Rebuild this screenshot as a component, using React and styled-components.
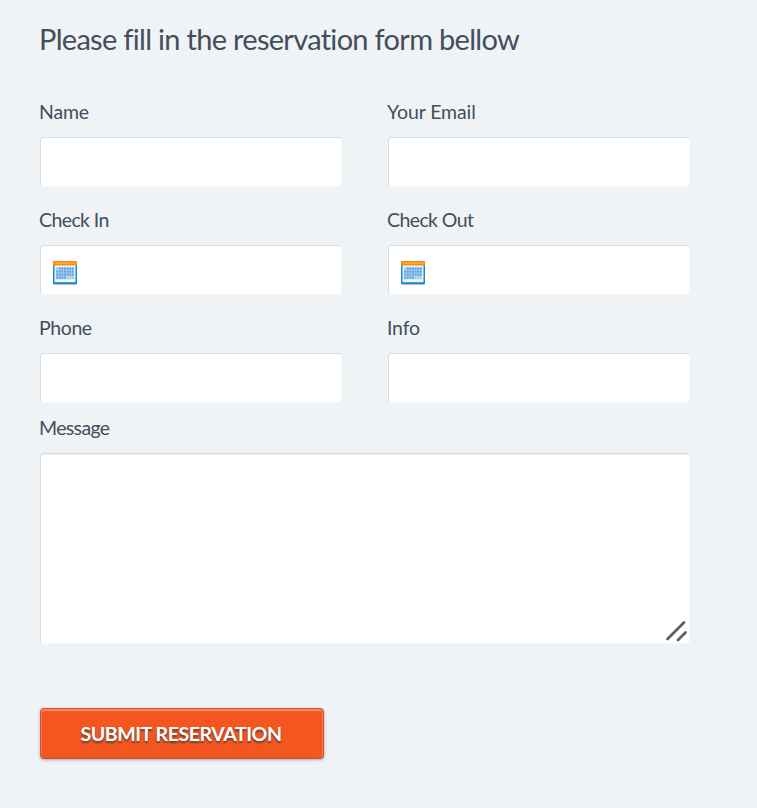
import React from 'react';
import styled, { createGlobalStyle, css } from 'styled-components';

const GlobalStyle = createGlobalStyle`
  * { box-sizing: border-box; }
  body { margin: 0; background: #eff3f6; }
`;

const Page = styled.main`
  min-height: 808px;
  padding: 19px 67px 0 40px;
  overflow: hidden;
  background: #eff3f6;
  color: #434e5b;
  font-family: Lato, 'Open Sans', sans-serif;
`;

const Title = styled.h1`
  margin: 0 0 39px -1px;
  height: 40px;
  font-size: 29px;
  font-weight: 400;
  line-height: 40px;
  letter-spacing: ${({ $tracking }) => $tracking}px;
  white-space: nowrap;
`;

const Fields = styled.div`
  display: grid;
  grid-template-columns: 302px 302px;
  column-gap: 46px;
  row-gap: 20px;
`;

const Field = styled.div`
  display: flex;
  flex-direction: column;
`;

const MessageField = styled(Field)`
  margin-top: 12px;
`;

const Label = styled.label`
  height: 28px;
  margin: 0 0 11px -1px;
  font-size: 19.5px;
  line-height: 28px;
  letter-spacing: ${({ $tracking }) => $tracking}px;
  white-space: nowrap;
`;

const controlStyle = css`
  display: block;
  width: 100%;
  border: 1px solid;
  border-color: #d6dde3 #f5f7f9 #f5f7f9 #d6dde3;
  border-radius: 4px;
  background: #fff;
  outline: none;
  font: inherit;
  color: inherit;
`;

const Control = styled.div`
  ${controlStyle}
  display: flex;
  align-items: center;
  height: 50px;
  margin-bottom: -1px;
  padding: 5px 12px 0;
`;

const Input = styled.input`
  flex: 1;
  min-width: 0;
  border: 0;
  outline: none;
  background: transparent;
  font: inherit;
  color: inherit;
`;

const MessageBox = styled.div`
  ${controlStyle}
  display: flex;
  align-items: flex-end;
  height: 191px;
  border-top-color: #d0d8de;
  box-shadow: inset 0 1px 0 #eef1f4;
`;

const TextArea = styled.textarea`
  flex: 1;
  height: 100%;
  padding: 12px;
  border: 0;
  outline: none;
  resize: none;
  background: transparent;
  font: inherit;
  color: inherit;
`;

const Grip = styled.svg`
  width: 24px;
  height: 24px;
  flex: none;
`;

const Icon = styled.svg`
  display: block;
  flex: none;
  width: 24px;
  height: 25px;
`;

const Submit = styled.button`
  display: block;
  width: 284px;
  height: 51px;
  margin: 64px 0 0;
  padding: 0 2px 0 0;
  border: 1px solid #d5502a;
  border-radius: 4px;
  background: #f3571f;
  box-shadow: inset 0 2px 1px #f58a66, inset 1px 0 0 #f4794f, inset -1px 0 0 #f4794f,
    0 1px 3px rgba(50, 60, 70, 0.4);
  color: #fff;
  font-family: Lato, sans-serif;
  font-size: 19.5px;
  font-weight: 700;
  letter-spacing: ${({ $tracking }) => $tracking}px;
  line-height: 49px;
  text-shadow: 0 2px 2px rgba(50, 55, 60, 0.75);
  white-space: nowrap;
`;

const days = [];
for (let row = 0; row < 4; row += 1) {
  for (let col = 0; col < 7; col += 1) {
    const muted = (row === 0 && col < 1) || (row === 3 && col > 3);
    days.push({ x: 3.2 + col * 2.6, y: 7.5 + row * 3, fill: muted ? '#c9c3c8' : '#5ba0e2' });
  }
}

function CalendarIcon() {
  return (
    <Icon viewBox="0 0 24 25" aria-hidden="true">
      <rect x="0.3" y="2" width="23.7" height="22.8" rx="1" fill="#a9a9a9" />
      <rect x="0" y="1" width="24" height="23" rx="0.8" fill="#1688cc" />
      <rect x="1.5" y="5" width="21" height="17.2" fill="#edf7fd" />
      <path d="M0 5.4V1.8Q0 1 .8 1h22.4q.8 0 .8.8v3.6z" fill="#f58c10" />
      <path d="M1.5 3.2h21" stroke="#ffb03c" strokeWidth="1.4" />
      <rect x="2.8" y="7.1" width="18.4" height="12.3" fill="#b9d9f5" />
      {days.map((d) => (
        <rect key={`${d.x}-${d.y}`} x={d.x} y={d.y} width="2" height="2.2" fill={d.fill} />
      ))}
    </Icon>
  );
}

const fields = [
  { id: 'name', label: 'Name', tracking: -0.2 },
  { id: 'email', label: 'Your Email', tracking: -0.1, type: 'email' },
  { id: 'checkin', label: 'Check In', tracking: -0.6 },
  { id: 'checkout', label: 'Check Out', tracking: -0.6 },
  { id: 'phone', label: 'Phone', tracking: -0.4, type: 'tel' },
  { id: 'info', label: 'Info', tracking: -0.2 },
];

const dateFields = ['checkin', 'checkout'];

export default function App() {
  return (
    <>
      <GlobalStyle />
      <Page>
        <Title $tracking={-0.7}>Please fill in the reservation form bellow</Title>
        <form onSubmit={(e) => e.preventDefault()}>
          <Fields>
            {fields.map((f) => (
              <Field key={f.id}>
                <Label htmlFor={f.id} $tracking={f.tracking}>{f.label}</Label>
                <Control>
                  {dateFields.includes(f.id) && <CalendarIcon />}
                  <Input id={f.id} type={f.type || 'text'} />
                </Control>
              </Field>
            ))}
          </Fields>
          <MessageField>
            <Label htmlFor="message" $tracking={-0.65}>Message</Label>
            <MessageBox>
              <TextArea id="message" />
              <Grip viewBox="0 0 24 24" fill="none" stroke="#606060" strokeWidth="2.8" strokeLinecap="round">
                <path d="M2.5 20 19 3.5M13 21l7.5-7.5" />
              </Grip>
            </MessageBox>
          </MessageField>
          <Submit type="submit" $tracking={-0.42}>SUBMIT RESERVATION</Submit>
        </form>
      </Page>
    </>
  );
}
